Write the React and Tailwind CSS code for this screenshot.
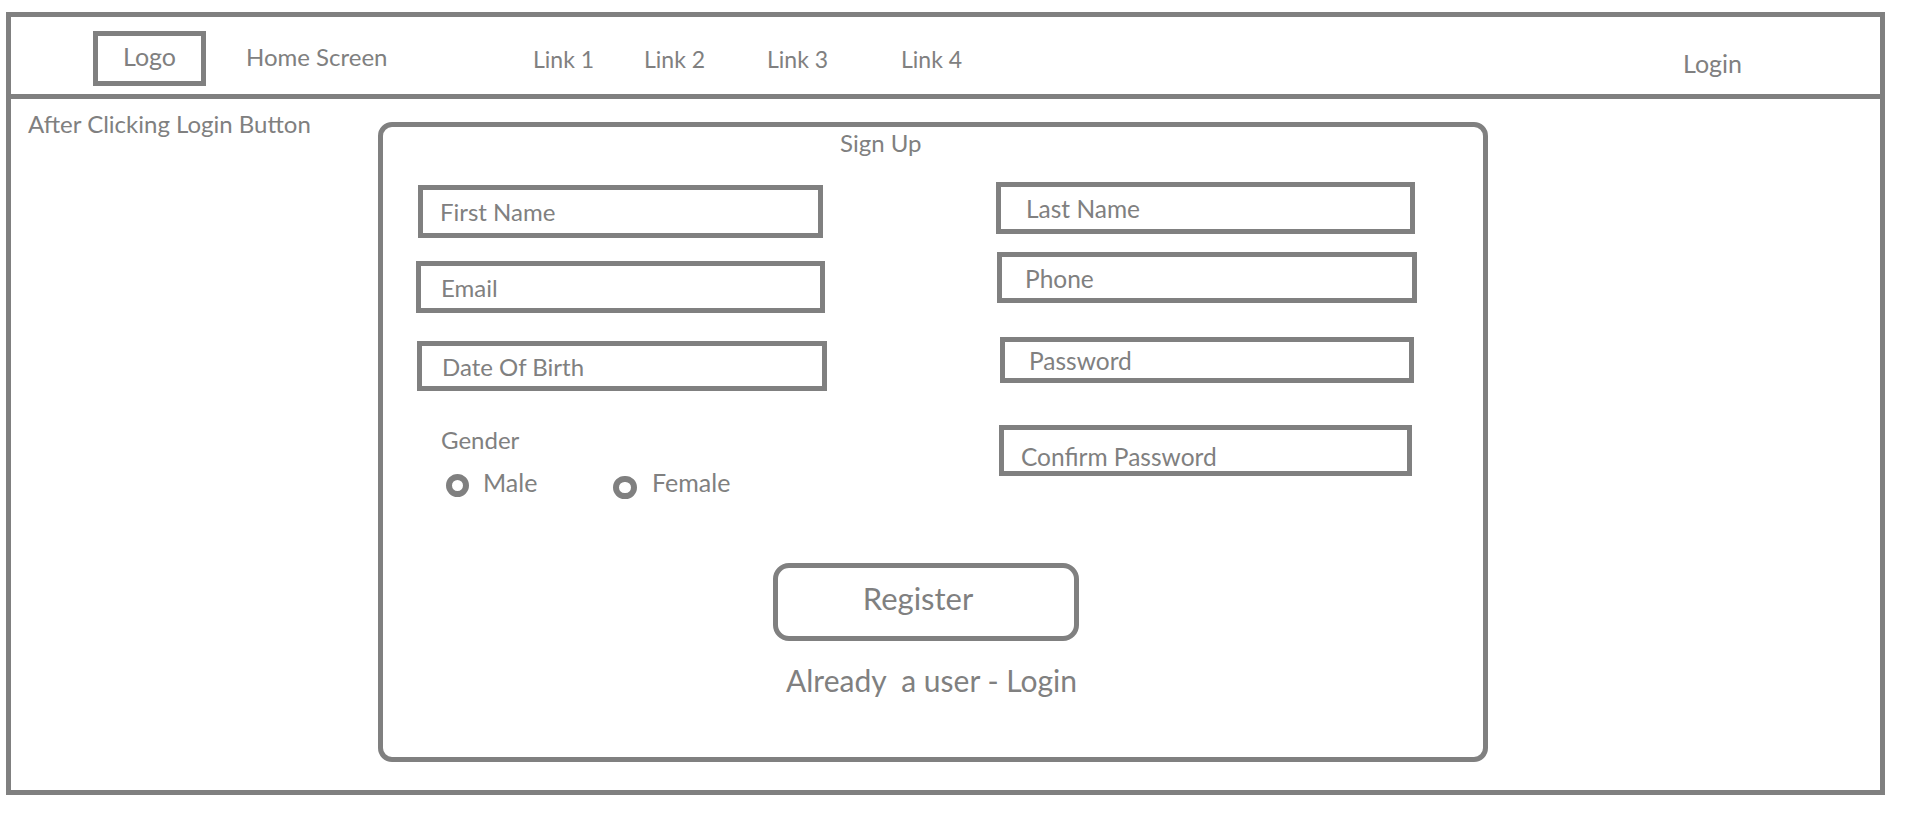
export default function App() {
  return (
    <div className="w-[1914px] h-[822px] bg-white pt-[12px] pl-[6px] font-['Lato',sans-serif] text-[#808080]">
      <div className="w-[1879px] h-[783px] border-[5px] border-[#808080] flex flex-col">
        {/* Top nav */}
        <div className="h-[82px] border-b-[5px] border-[#808080] flex items-start shrink-0 text-[24px] leading-[29px]">
          <div className="ml-[82px] mt-[14px] w-[113px] h-[55px] border-[5px] border-[#808080] flex items-center justify-center pb-[5px] text-[25px]">
            Logo
          </div>
          <div className="ml-[40px] mt-[25px] w-[287px]">Home Screen</div>
          <div className="mt-[28px] w-[111px] text-[23px]">Link 1</div>
          <div className="mt-[28px] w-[123px] text-[23px]">Link 2</div>
          <div className="mt-[28px] w-[134px] text-[23px]">Link 3</div>
          <div className="mt-[28px] w-[782px] text-[23px]">Link 4</div>
          <div className="mt-[32px] text-[25px]">Login</div>
        </div>

        {/* Body */}
        <div className="flex items-start">
          <div className="w-[367px] shrink-0 pl-[17px] pt-[10px] text-[24px] leading-[29px]">After Clicking Login Button</div>

          {/* Sign up card */}
          <div className="mt-[23px] w-[1110px] h-[640px] shrink-0 border-[5px] border-[#808080] rounded-[14px] flex flex-col">
            <div className="ml-[457px] mt-[1px] h-[29px] text-[24px] leading-[29px]">Sign Up</div>

            <div className="flex items-start h-[342px]">
              {/* left column */}
              <div className="ml-[33px] w-[411px] shrink-0 flex flex-col text-[24px] leading-[29px]">
                <div className="mt-[28px] ml-[2px] w-[405px] h-[53px] border-[5px] border-[#808080] flex items-center pl-[17px]">
                  First Name
                </div>
                <div className="mt-[23px] w-[409px] h-[52px] border-[5px] border-[#808080] flex items-center pl-[20px]">
                  Email
                </div>
                <div className="mt-[28px] ml-[1px] w-[410px] h-[50px] border-[5px] border-[#808080] flex items-center pl-[20px]">
                  Date Of Birth
                </div>
                <div className="mt-[34px] ml-[25px] h-[29px]">Gender</div>
                <div className="mt-[14px] flex items-start text-[25px]">
                  <div className="ml-[30px] w-[167px] flex items-start">
                    <span className="mt-[6px] w-[23px] h-[23px] rounded-full border-[6px] border-[#808080]"></span>
                    <span className="ml-[14px]">Male</span>
                  </div>
                  <div className="flex items-start">
                    <span className="mt-[8px] w-[24px] h-[23px] rounded-full border-[6px] border-[#808080]"></span>
                    <span className="ml-[15px]">Female</span>
                  </div>
                </div>
              </div>

              {/* right column */}
              <div className="ml-[169px] flex flex-col text-[24.5px] leading-[29px]">
                <div className="mt-[25px] w-[419px] h-[52px] border-[5px] border-[#808080] flex items-center pl-[25px]">
                  Last Name
                </div>
                <div className="mt-[18px] ml-[1px] w-[420px] h-[51px] border-[5px] border-[#808080] flex items-center pl-[23px] pt-[2px]">
                  Phone
                </div>
                <div className="mt-[34px] ml-[4px] w-[414px] h-[46px] border-[5px] border-[#808080] flex items-center pl-[24px]">
                  Password
                </div>
                <div className="mt-[42px] ml-[3px] w-[413px] h-[51px] border-[5px] border-[#808080] flex items-center pl-[17px] pt-[11px]">
                  Confirm Password
                </div>
              </div>
            </div>

            <button className="ml-[390px] mt-[64px] w-[306px] h-[78px] border-[5px] border-[#808080] rounded-[16px] flex items-center justify-center pr-[16px] pb-[7px] text-[31px] leading-[37px] text-[#808080]">
              Register
            </button>
            <div className="ml-[403px] mt-[21px] text-[30px] leading-[36px] whitespace-pre">Already  a user - Login</div>
          </div>
        </div>
      </div>
    </div>
  );
}
